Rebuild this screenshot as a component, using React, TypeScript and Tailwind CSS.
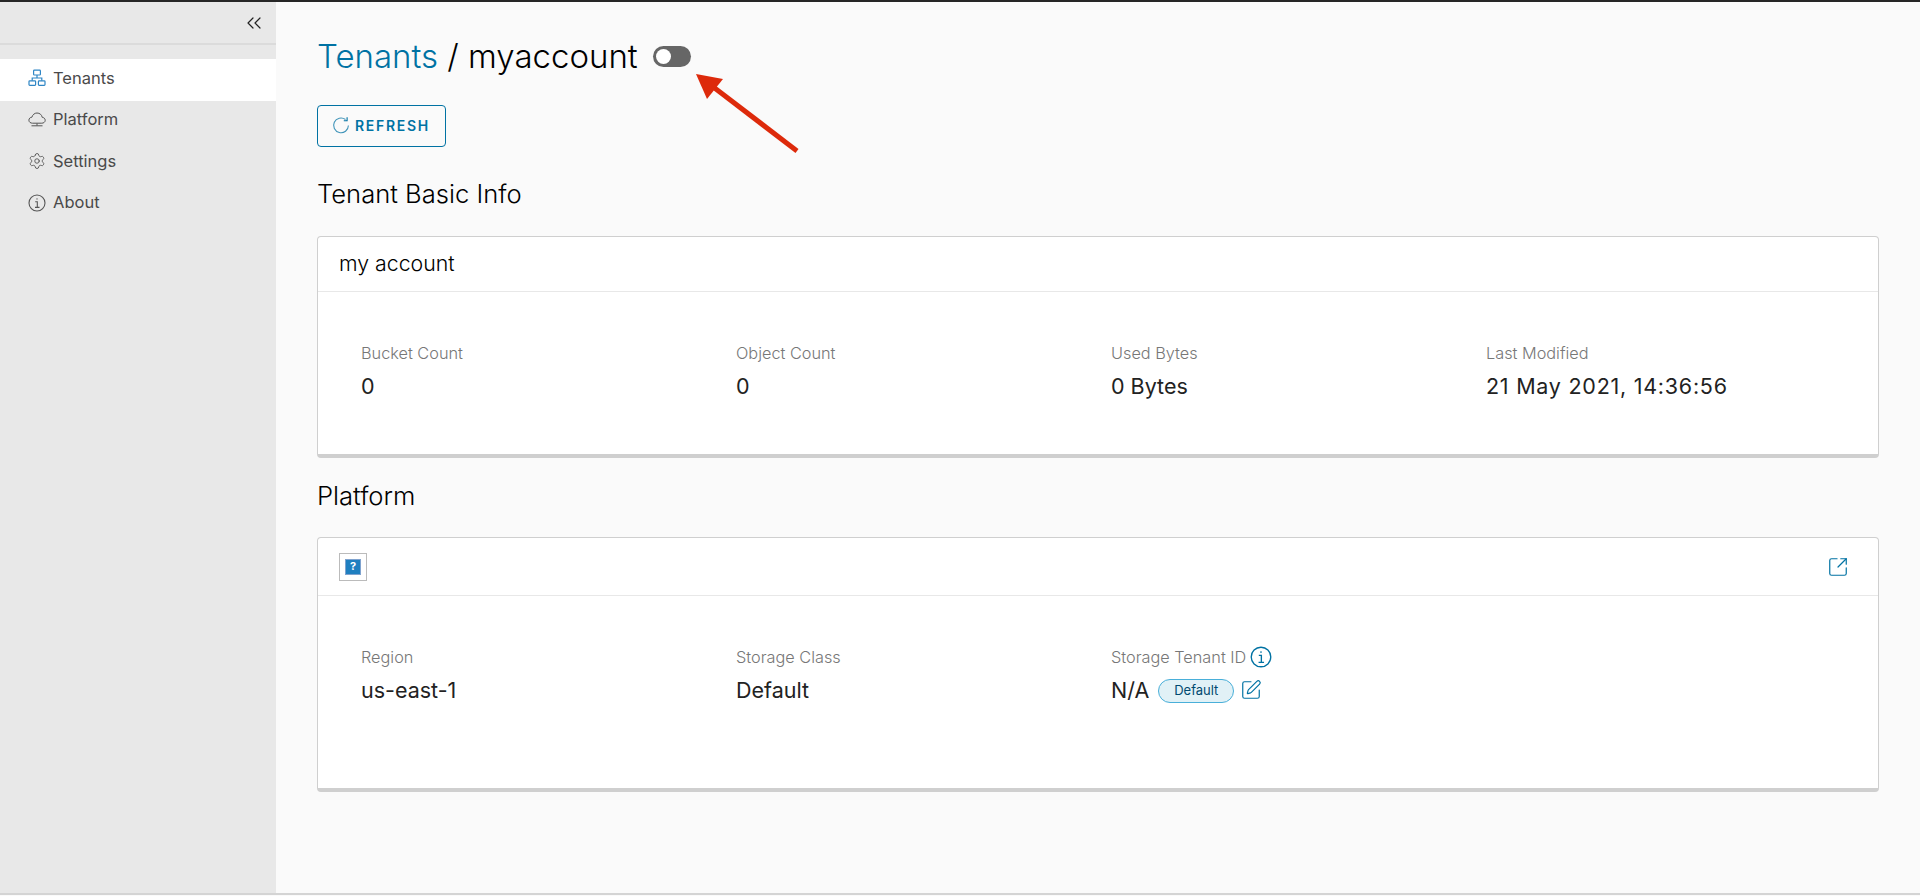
import React from "react";
import { ChevronsLeft, Settings, SquareArrowOutUpRight, SquarePen } from "lucide-react";

const TenantsIcon = () => (
  <svg viewBox="0 0 18 18" className="w-[18px] h-[18px] text-[#2f86c5]" fill="none" stroke="currentColor" strokeWidth="1.2">
    <rect x="5.6" y="1.2" width="6.8" height="4.8" rx="0.8" />
    <rect x="1" y="11.8" width="6.6" height="4.6" rx="0.8" />
    <rect x="10.4" y="11.8" width="6.6" height="4.6" rx="0.8" />
    <path d="M9 6v3H4.2v2.8M9 9h4.8v2.8" />
  </svg>
);

const CloudIcon = () => (
  <svg viewBox="0 0 18 18" className="w-[18px] h-[18px] text-[#555]" fill="none" stroke="currentColor" strokeWidth="1">
    <path d="M4.5 12.2c-2 0-3.6-1.2-3.6-3 0-1.7 1.3-2.9 3-3C4.6 3.7 6.6 2 9 2c2.7 0 4.8 1.8 5.2 4.3 1.7.2 3 1.3 3 3 0 1.7-1.6 2.9-3.4 2.9z" />
    <path d="M3.5 14.8h11M9 12.5v2" />
  </svg>
);

const InfoIcon = ({ className }: { className: string }) => (
  <svg viewBox="0 0 18 18" className={className} fill="none" stroke="currentColor" strokeWidth="1.1">
    <circle cx="9" cy="9" r="8" />
    <path d="M7.2 7.7H9.3V13.3M7 13.4h4.5" />
    <circle cx="9" cy="4.9" r="0.7" fill="currentColor" stroke="none" />
  </svg>
);

const RefreshIcon = () => (
  <svg viewBox="0 0 18 18" className="w-[18px] h-[18px] text-[#0072a3]" fill="none" stroke="currentColor" strokeWidth="1.1">
    <path d="M13.5 3.5A7.4 7.4 0 1 0 16.4 9.5" opacity="0.75" />
    <path d="M11.8 4.7h3.3V1.2" />
  </svg>
);

const NavItem = ({ icon, label, active }: { icon: React.ReactNode; label: string; active?: boolean }) => (
  <div className={`flex items-center gap-[7px] h-[41.5px] pl-[28px] pb-[4px] text-[16.5px] text-[#4a4a4a] ${active ? "bg-white h-[42px]" : ""}`}>
    {icon}
    <span>{label}</span>
  </div>
);

const Stat = ({ label, children }: { label: string; children: React.ReactNode }) => (
  <div>
    <div className="h-[24px] leading-[24px] text-[16.3px] font-light text-[#777]">{label}</div>
    <div className="mt-[9px] h-[24px] leading-[24px] text-[21.5px] text-[#222]">{children}</div>
  </div>
);

const Card = ({ header, headerHeight, bodyHeight, children }: { header: React.ReactNode; headerHeight: string; bodyHeight: string; children: React.ReactNode }) => (
  <div className="rounded-[4px] border border-[#cfcfcf] border-b-[4px] bg-white">
    <div className={`flex items-center justify-between px-[21px] border-b border-[#e8e8e8] ${headerHeight}`}>{header}</div>
    <div className={`grid grid-cols-4 pl-[43px] pr-[17px] ${bodyHeight}`}>{children}</div>
  </div>
);

export default function App() {
  return (
    <div className="relative h-[896px] overflow-hidden flex flex-col bg-[#fafafa] font-['Inter','Liberation_Sans',sans-serif]">
      <div className="h-[2px] bg-[#262626]" />
      <div className="flex flex-1 min-h-0">
        <aside className="w-[276px] shrink-0 bg-[#e8e8e8]">
          <div className="flex items-center justify-end h-[43px] pr-[10px] border-b-2 border-[#dbdbdb]">
            <ChevronsLeft className="w-[24px] h-[24px] text-[#222]" strokeWidth={1.2} />
          </div>
          <div className="pt-[14px]">
            <NavItem active icon={<TenantsIcon />} label="Tenants" />
            <NavItem icon={<CloudIcon />} label="Platform" />
            <NavItem icon={<Settings className="w-[18px] h-[18px] text-[#555]" strokeWidth={1.2} />} label="Settings" />
            <NavItem icon={<InfoIcon className="w-[18px] h-[18px] text-[#555]" />} label="About" />
          </div>
        </aside>
        <main className="flex-1 pl-[41px] pr-[41px] pt-[34px]">
          <div className="flex items-center h-[40px]">
            <h1 className="text-[33px] leading-[40px] font-light text-black">
              <span className="text-[#0072a3]">Tenants</span> / myaccount
            </h1>
            <div className="ml-[15px] flex items-center w-[38px] h-[21px] rounded-full bg-[#666] pl-[3px]">
              <div className="w-[15px] h-[15px] rounded-full bg-white" />
            </div>
          </div>
          <button className="mt-[29px] flex items-center gap-[5px] w-[129px] h-[42px] pl-[14px] pb-[2px] rounded-[4px] border border-[#0072a3] text-[#0072a3] text-[14px] font-semibold tracking-[1.7px]">
            <RefreshIcon />
            REFRESH
          </button>
          <h2 className="mt-[31px] text-[25.6px] leading-[32px] font-light text-black">Tenant Basic Info</h2>
          <div className="mt-[26px]">
            <Card
              headerHeight="h-[55px]"
              bodyHeight="h-[162px] pt-[49px]"
              header={<span className="text-[21.3px] font-light text-black">my account</span>}
            >
              <Stat label="Bucket Count">0</Stat>
              <Stat label="Object Count">0</Stat>
              <Stat label="Used Bytes">0 Bytes</Stat>
              <Stat label="Last Modified"><span className="tracking-[0.75px]">21 May 2021, 14:36:56</span></Stat>
            </Card>
          </div>
          <h2 className="mt-[22px] text-[25.6px] leading-[32px] font-light text-black">Platform</h2>
          <div className="mt-[25px]">
            <Card
              headerHeight="h-[58px]"
              bodyHeight="h-[192px] pt-[49px]"
              header={
                <>
                  <div className="flex items-center justify-center w-[28px] h-[28px] border border-[#bbb]">
                    <div className="flex items-center justify-center w-[16px] h-[16px] border border-[#7fa3cf] bg-[#1f7fc0] text-[11px] font-bold leading-none text-white">?</div>
                  </div>
                  <SquareArrowOutUpRight className="w-[22px] h-[22px] mr-[8px] text-[#0072a3]" strokeWidth={1.3} />
                </>
              }
            >
              <Stat label="Region">us-east-1</Stat>
              <Stat label="Storage Class">Default</Stat>
              <div>
                <div className="flex items-center gap-[4px] h-[24px] text-[16.3px] font-light text-[#777]">
                  Storage Tenant ID
                  <InfoIcon className="w-[22px] h-[22px] text-[#0072a3]" />
                </div>
                <div className="mt-[9px] flex items-center h-[24px] text-[21.5px] text-[#222]">
                  N/A
                  <span className="ml-[9px] mt-[1px] flex items-center justify-center w-[76px] h-[24px] rounded-full border border-[#49afd9] bg-[#e1f1f6] text-[13px] text-[#004a70]">Default</span>
                  <SquarePen className="ml-[6px] w-[22px] h-[22px] text-[#0072a3]" strokeWidth={1.3} />
                </div>
              </div>
            </Card>
          </div>
        </main>
      </div>
      <div className="h-[3px] border-t-2 border-[#d4d4d4]" />
      {/* annotation arrow */}
      <svg className="absolute left-0 top-0 w-[1920px] h-[896px] pointer-events-none" viewBox="0 0 1920 896">
        <path d="M797 151L712 86" stroke="#dd2a0b" strokeWidth="5" fill="none" />
        <polygon points="696,74 723,79 707,99" fill="#dd2a0b" />
      </svg>
    </div>
  );
}
